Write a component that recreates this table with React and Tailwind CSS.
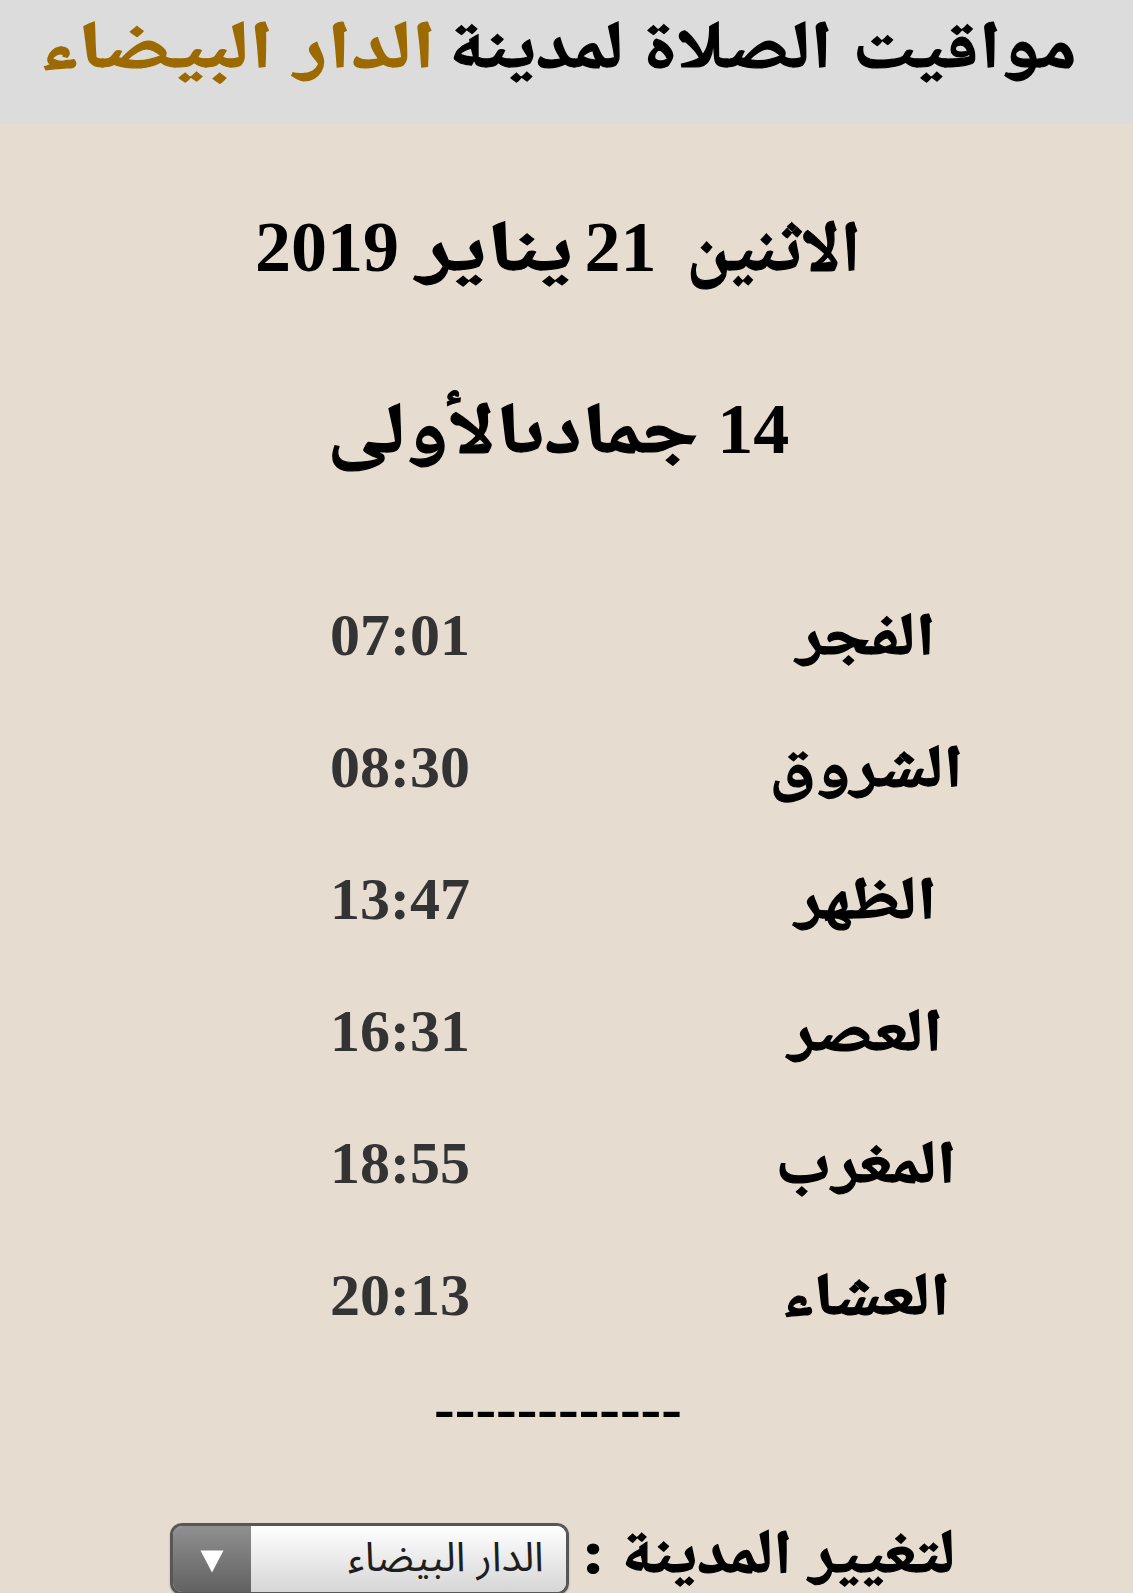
const FONT = "font-['Liberation_Serif','Noto_Naskh_Arabic',serif]";
const STROKE = "[-webkit-text-stroke-width:1.2px]";

const prayers = [
  ["الفجر", "07:01"],
  ["الشروق", "08:30"],
  ["الظهر", "13:47"],
  ["العصر", "16:31"],
  ["المغرب", "18:55"],
  ["العشاء", "20:13"],
];

export default function App() {
  return (
    <div dir="rtl" className={`h-[1593px] overflow-hidden bg-[#e7dcd0] text-black font-bold ${FONT}`}>
      <header className="h-[124px] bg-[#dcdcdc] pr-[17px]">
        <h1 className="flex justify-center items-baseline text-[67px] leading-[90px] whitespace-nowrap font-bold">
          <span className={`inline-block scale-x-[1.176] mr-[46px] ml-[61px] ${STROKE}`}>مواقيت الصلاة لمدينة</span>
          <span className={`inline-block scale-x-[1.278] mr-[42px] ml-[42px] text-[#9c6a00] ${STROKE}`}>الدار البيضاء</span>
        </h1>
      </header>

      <div className="pr-[17px]">
        <div className="mt-[83px] flex justify-center items-baseline text-[72px] leading-[80px] whitespace-nowrap">
          <span className={`inline-block ml-[30px] ${STROKE}`}>الاثنين</span>
          <span className="inline-block">21</span>
          <span className={`inline-block scale-x-[1.3] mr-[30px] ml-[36px] ${STROKE}`}>يناير</span>
          <span className="inline-block">2019</span>
        </div>

        <div className="mt-[102px] flex justify-center items-baseline text-[72px] leading-[80px] whitespace-nowrap">
          <span className="inline-block">14</span>
          <span className={`inline-block scale-x-[1.2] mr-[50px] ml-[31px] ${STROKE}`}>جمادىالأولى</span>
        </div>

        <div dir="ltr" className="mt-[100px] ml-[300px] grid grid-cols-[200px_200px] gap-x-[266px]">
          {prayers.map(([name, time]) => (
            <div key={name} className="contents">
              <div className="text-center text-[60px] leading-[132px] text-[#333333]">{time}</div>
              <div dir="rtl" className="text-center text-[60px] leading-[132px] whitespace-nowrap">
                <span className={`inline-block scale-x-[1.18] ${STROKE}`}>{name}</span>
              </div>
            </div>
          ))}
        </div>

        <div className="mt-[17px] text-center text-[62px] leading-[60px]">------------</div>

        <div className="mt-[85px] flex items-start justify-center gap-[30px] pr-[8px]">
          <div className="text-[62px] leading-[58px] whitespace-nowrap">
            <span className={`inline-block scale-x-[1.1] ${STROKE}`}>لتغيير المدينة :</span>
          </div>
          <div className="w-[399px] h-[72px] rounded-[12px] border-[3px] border-[#575757] flex overflow-hidden shadow-[0_1px_2px_rgba(0,0,0,0.25)]">
            <div className="flex-1 bg-gradient-to-b from-[#ffffff] to-[#d6d6d6] pr-[22px] pt-[11px] text-right">
              <span className="font-['Liberation_Sans','Noto_Sans_Arabic',sans-serif] font-normal text-[41px] leading-[40px] text-[#1e1e1e]">
                الدار البيضاء
              </span>
            </div>
            <div className="w-[78px] bg-gradient-to-b from-[#909090] to-[#626262] flex justify-center pt-[24px]">
              <svg width="24" height="23" viewBox="0 0 24 23">
                <path d="M0.5 0.5 H23.5 L12 22.5 Z" fill="#ffffff" />
              </svg>
            </div>
          </div>
        </div>
      </div>
    </div>
  );
}
